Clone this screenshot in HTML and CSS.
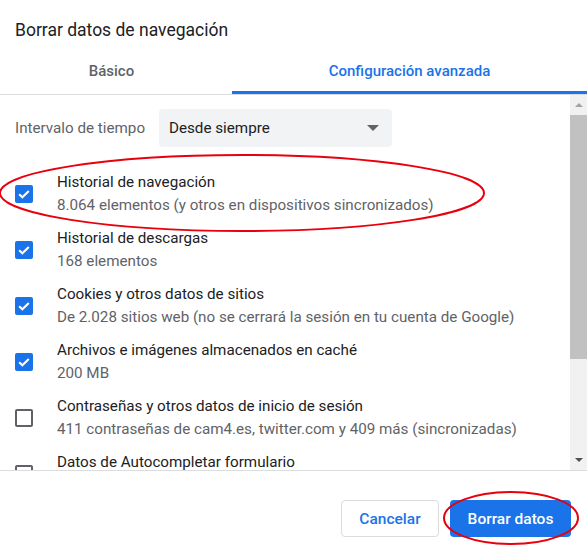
FILE: index.html
```html
<!DOCTYPE html>
<html lang="es">
<head>
<meta charset="utf-8">
<title>Borrar datos de navegación</title>
<link rel="stylesheet" href="styles.css">
</head>
<body>
<div class="dialog">
  <div class="header">
    <h1 class="title">Borrar datos de navegación</h1>
  </div>
  <div class="tabs">
    <div class="tab">Básico</div>
    <div class="tab active">Configuración avanzada</div>
  </div>
  <div class="body">
    <div class="list">
      <div class="interval">
        <span class="interval-label">Intervalo de tiempo</span>
        <div class="select">
          <span>Desde siempre</span>
          <span class="caret"></span>
        </div>
      </div>
      <div class="row">
        <span class="cb checked"><svg viewBox="0 0 18 18" width="18" height="18"><path d="M4.2 9.2 L7.4 12.3 L13.8 5.9" fill="none" stroke="#fff" stroke-width="2.1"/></svg></span>
        <div class="labels">
          <div class="label">Historial de navegación</div>
          <div class="sub">8.064 elementos (y otros en dispositivos sincronizados)</div>
        </div>
      </div>
      <div class="row">
        <span class="cb checked"><svg viewBox="0 0 18 18" width="18" height="18"><path d="M4.2 9.2 L7.4 12.3 L13.8 5.9" fill="none" stroke="#fff" stroke-width="2.1"/></svg></span>
        <div class="labels">
          <div class="label">Historial de descargas</div>
          <div class="sub">168 elementos</div>
        </div>
      </div>
      <div class="row">
        <span class="cb checked"><svg viewBox="0 0 18 18" width="18" height="18"><path d="M4.2 9.2 L7.4 12.3 L13.8 5.9" fill="none" stroke="#fff" stroke-width="2.1"/></svg></span>
        <div class="labels">
          <div class="label">Cookies y otros datos de sitios</div>
          <div class="sub">De 2.028 sitios web (no se cerrará la sesión en tu cuenta de Google)</div>
        </div>
      </div>
      <div class="row">
        <span class="cb checked"><svg viewBox="0 0 18 18" width="18" height="18"><path d="M4.2 9.2 L7.4 12.3 L13.8 5.9" fill="none" stroke="#fff" stroke-width="2.1"/></svg></span>
        <div class="labels">
          <div class="label">Archivos e imágenes almacenados en caché</div>
          <div class="sub">200 MB</div>
        </div>
      </div>
      <div class="row">
        <span class="cb"></span>
        <div class="labels">
          <div class="label">Contraseñas y otros datos de inicio de sesión</div>
          <div class="sub">411 contraseñas de cam4.es, twitter.com y 409 más (sincronizadas)</div>
        </div>
      </div>
      <div class="row">
        <span class="cb"></span>
        <div class="labels">
          <div class="label">Datos de Autocompletar formulario</div>
          <div class="sub">&nbsp;</div>
        </div>
      </div>
    </div>
    <div class="scrollbar">
      <div class="sb-btn"><span class="sb-up"></span></div>
      <div class="sb-thumb"></div>
      <div class="sb-track"></div>
      <div class="sb-btn"><span class="sb-down"></span></div>
    </div>
  </div>
  <div class="footer">
    <button class="btn btn-cancel">Cancelar</button>
    <button class="btn btn-primary">Borrar datos</button>
  </div>
  <svg class="marks" width="587" height="550" viewBox="0 0 587 550">
    <ellipse cx="242" cy="193" rx="242" ry="38" fill="none" stroke="#e8000d" stroke-width="2"/>
    <ellipse cx="511" cy="518" rx="67" ry="26" fill="none" stroke="#e8000d" stroke-width="2"/>
  </svg>
</div>
</body>
</html>
```

FILE: styles.css
```css
* { box-sizing: border-box; }
html, body {
  margin: 0;
  padding: 0;
  background: #fff;
}
body {
  font-family: Roboto, "Liberation Sans", Arial, sans-serif;
  color: #202124;
}
.dialog {
  position: relative;
  width: 587px;
  height: 550px;
  display: flex;
  flex-direction: column;
  overflow: hidden;
}
.header {
  padding: 19px 15px 0;
}
.title {
  margin: 0;
  font-size: 17.5px;
  font-weight: 400;
  line-height: 22px;
  color: #202124;
}
.tabs {
  margin-top: 9px;
  display: flex;
  border-bottom: 1px solid #dadce0;
}
.tab {
  height: 44px;
  display: flex;
  align-items: center;
  justify-content: center;
  font-size: 15px;
  font-weight: 500;
  color: #5f6368;
  border-bottom: 3px solid transparent;
  padding-top: 1px;
}
.tab:first-child {
  width: 232px;
  padding-right: 9px;
}
.tab.active {
  flex: 1;
  color: #1a73e8;
  border-bottom-color: #1a73e8;
}
.body {
  height: 376px;
  display: flex;
  border-bottom: 1px solid #dadce0;
}
.list {
  flex: 1;
  overflow: hidden;
  padding-top: 14px;
}
.interval {
  display: flex;
  align-items: center;
  padding-left: 15px;
  height: 38px;
}
.interval-label {
  width: 144px;
  font-size: 15.2px;
  color: #5f6368;
}
.select {
  width: 233px;
  height: 38px;
  background: #f1f3f4;
  border-radius: 4px;
  display: flex;
  align-items: center;
  justify-content: space-between;
  padding: 0 10px 0 10px;
  font-size: 15.2px;
  color: #202124;
}
.caret {
  width: 0;
  height: 0;
  border-left: 6px solid transparent;
  border-right: 6px solid transparent;
  border-top: 6px solid #5f6368;
  margin-right: 3px;
}
.interval + .row { margin-top: 18px; }
.row {
  height: 56px;
  display: flex;
  align-items: center;
  padding-left: 15px;
}
.cb {
  flex: none;
  width: 18px;
  height: 18px;
  border: 2px solid #5f6368;
  border-radius: 2px;
  margin-right: 24px;
  margin-top: 2px;
  display: flex;
}
.cb.checked {
  border: none;
  background: #1a73e8;
}
.labels {
  display: flex;
  flex-direction: column;
  padding-top: 2px;
}
.label {
  font-size: 15.2px;
  line-height: 23px;
  color: #202124;
  white-space: nowrap;
}
.sub {
  font-size: 15.2px;
  line-height: 23px;
  color: #5f6368;
  white-space: nowrap;
}
.scrollbar {
  width: 17px;
  flex: none;
  background: #f1f1f1;
  display: flex;
  flex-direction: column;
}
.sb-btn {
  height: 20px;
  display: flex;
  align-items: center;
  justify-content: center;
}
.sb-up {
  width: 0; height: 0;
  border-left: 4px solid transparent;
  border-right: 4px solid transparent;
  border-bottom: 4px solid #a3a3a3;
}
.sb-down {
  width: 0; height: 0;
  border-left: 4px solid transparent;
  border-right: 4px solid transparent;
  border-top: 4px solid #505050;
}
.sb-thumb {
  height: 244px;
  background: #c1c1c1;
}
.sb-track { flex: 1; }
.footer {
  flex: 1;
  display: flex;
  justify-content: flex-end;
  align-items: flex-start;
  padding: 29px 16px 0 0;
  gap: 11px;
}
.btn {
  height: 37px;
  border-radius: 4px;
  font-family: Roboto, "Liberation Sans", Arial, sans-serif;
  font-size: 15.5px;
  font-weight: 500;
  padding: 0;
  cursor: pointer;
}
.btn-cancel {
  width: 98px;
  background: #fff;
  color: #1a73e8;
  border: 1px solid #dadce0;
}
.btn-primary {
  width: 121px;
  background: #1a73e8;
  color: #fff;
  border: none;
}
.marks {
  position: absolute;
  left: 0;
  top: 0;
  pointer-events: none;
}
```
